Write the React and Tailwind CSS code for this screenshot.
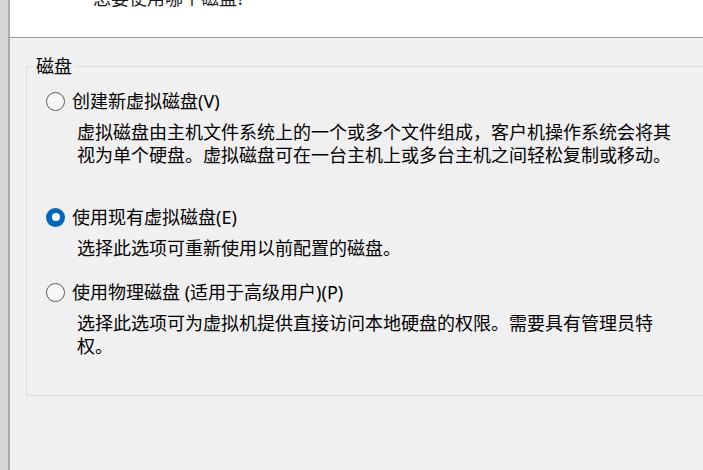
import React from 'react';

const options = [
  {
    label: '创建新虚拟磁盘',
    key: 'V',
    checked: false,
    desc: '虚拟磁盘由主机文件系统上的一个或多个文件组成，客户机操作系统会将其视为单个硬盘。虚拟磁盘可在一台主机上或多台主机之间轻松复制或移动。',
    mt: 'mt-[11px]',
  },
  {
    label: '使用现有虚拟磁盘',
    key: 'E',
    checked: true,
    desc: '选择此选项可重新使用以前配置的磁盘。',
    mt: 'mt-[38px]',
  },
  {
    label: '使用物理磁盘 (适用于高级用户)',
    key: 'P',
    checked: false,
    desc: '选择此选项可为虚拟机提供直接访问本地硬盘的权限。需要具有管理员特权。',
    mt: 'mt-[20px]',
  },
];

const Radio = ({ checked }) =>
  checked ? (
    <span className="w-[19px] h-[19px] rounded-full bg-[#0067c0] flex items-center justify-center shrink-0">
      <span className="w-[8px] h-[8px] rounded-full bg-white" />
    </span>
  ) : (
    <span className="w-[19px] h-[19px] rounded-full border border-[#5c5c5c] bg-[#f7f7f7] shrink-0" />
  );

const App = () => {
  return (
    <div className="w-[703px] h-[470px] flex overflow-hidden bg-[#f0f0f0] text-black font-['Noto_Sans','Noto_Sans_CJK_SC',sans-serif]">
      {/* left window edge */}
      <div className="w-[10px] shrink-0 bg-[#d6d6d6] border-r-2 border-[#ababab]" />

      <div className="flex-1 flex flex-col min-w-0">
        {/* header */}
        <div className="h-[38px] shrink-0 bg-white border-b border-[#a0a0a0] overflow-hidden">
          <p className="ml-[83px] -mt-[11px] text-[18px] leading-[18px] text-[#1a1a1a]">您要使用哪个磁盘?</p>
        </div>

        {/* body */}
        <div className="flex-1 pl-[16px]">
          <fieldset className="mt-[16px] h-[342px] -mr-[10px] border border-[#dcdcdc] border-r-0">
            <legend className="ml-[6px] px-[3px] text-[18px] leading-[24px]">磁盘</legend>
            {options.map((o) => (
              <div key={o.key} className={o.mt}>
                <div className="flex items-center gap-[7px] pl-[19px] text-[18px] leading-[24px]">
                  <Radio checked={o.checked} />
                  <span>
                    {o.label}({o.key})
                  </span>
                </div>
                <p className="mt-[8px] ml-[50px] w-[600px] text-[18px] leading-[23px]">{o.desc}</p>
              </div>
            ))}
          </fieldset>
        </div>
      </div>
    </div>
  );
};

export default App;
